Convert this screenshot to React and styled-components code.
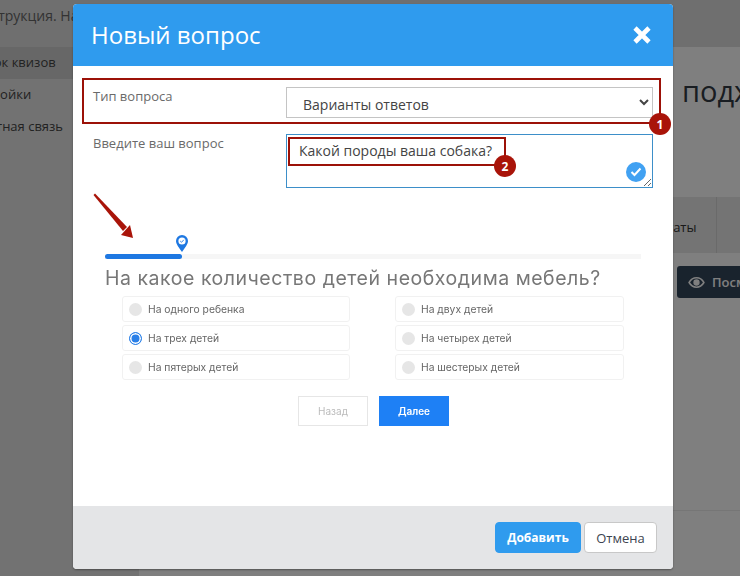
import React from "react";
import styled, { createGlobalStyle } from "styled-components";

const Global = createGlobalStyle`
  html, body { margin: 0; padding: 0; height: 100%; overflow: hidden; }
  body { font-family: "Open Sans", "Liberation Sans", sans-serif; background: #fff; }
`;

const Screen = styled.div`
  position: relative;
  width: 740px;
  height: 576px;
  overflow: hidden;
`;

const Page = styled.div`
  display: grid;
  grid-template-rows: 47px 1fr;
  height: 100%;
  margin-left: -37px;
`;

const TopBar = styled.div`
  background: #dfdfdf;
  color: #666;
  font-size: 14px;
  line-height: 31px;
  padding-left: 9px;
  white-space: nowrap;
`;

const PageBody = styled.div`
  display: grid;
  grid-template-columns: 176px 1fr;
  min-height: 0;
`;

const Sidebar = styled.nav`
  background: #e4e4e4;
`;

const SideItem = styled.div`
  height: 32px;
  line-height: 31px;
  font-size: 13px;
  color: #444;
  white-space: nowrap;
  background: ${p => (p.$active ? "#cfcfcf" : "transparent")};
`;

const Main = styled.main`
  min-width: 0;
  overflow: hidden;
  background: #fff;
`;

const PageTitle = styled.h1`
  margin: 24px 0 0;
  padding-left: 543px;
  height: 126px;
  font-size: 29px;
  line-height: 40px;
  font-weight: 400;
  color: #333b44;
  white-space: nowrap;
`;

const Tabs = styled.div`
  display: flex;
  height: 56px;
  background: #e8e8e8;
  padding-left: 485px;
  font-size: 13px;
  color: #333;
`;

const Tab = styled.div`
  width: 92px;
  line-height: 60px;
  border-right: 1px solid #d4d4d4;
  white-space: nowrap;
`;

const PreviewButton = styled.div`
  display: flex;
  align-items: center;
  gap: 7px;
  margin: 13px 0 0 538px;
  width: 200px;
  height: 32px;
  padding-left: 11px;
  background: #33465a;
  border-radius: 3px;
  color: #fff;
  font-size: 13px;
  font-weight: 600;
  white-space: nowrap;

  svg {
    flex: none;
  }
`;

const BottomRule = styled.div`
  margin-top: 212px;
  border-top: 1px solid #ececec;
`;

const Overlay = styled.div`
  position: absolute;
  inset: 0;
  background: rgba(0, 0, 0, 0.5);
`;

const Modal = styled.div`
  position: absolute;
  left: 73px;
  top: 4px;
  width: 600px;
  height: 565px;
  display: flex;
  flex-direction: column;
  background: #fff;
  border-radius: 4px;
  overflow: hidden;
  box-shadow: 0 1px 2px rgba(0, 0, 0, 0.35);
`;

const ModalHeader = styled.header`
  flex: none;
  height: 62px;
  display: flex;
  align-items: center;
  justify-content: space-between;
  padding: 0 21px 0 18px;
  background: #2f9bee;
  color: #fff;
`;

const ModalTitle = styled.h2`
  margin: 0;
  font-size: 24px;
  font-weight: 400;
  line-height: 62px;
`;

const ModalBody = styled.div`
  flex: 1;
  min-height: 0;
  padding: 21px 20px 0 20px;
`;

const FormRow = styled.div`
  display: grid;
  grid-template-columns: 193px 367px;
  margin-bottom: ${p => p.$gap || 0}px;
`;

const Label = styled.label`
  font-size: 13px;
  line-height: 20px;
  color: #6a6a6a;
  margin-top: -1px;
`;

const Select = styled.select`
  width: 367px;
  height: 31px;
  padding: 3px 0 0 12px;
  border: 1px solid #c4c4c4;
  background: #fff;
  font-family: inherit;
  font-size: 14px;
  color: #444;
  outline: none;
`;

const FieldWrap = styled.div`
  position: relative;
  height: 54px;
`;

const Textarea = styled.textarea`
  display: block;
  box-sizing: border-box;
  width: 367px;
  height: 54px;
  padding: 6px 12px;
  border: 1px solid #3d8fc9;
  font-family: inherit;
  font-size: 14px;
  line-height: 20px;
  color: #444;
  outline: none;
  resize: both;
`;

const ValidBadge = styled.span`
  position: absolute;
  right: 7px;
  bottom: 6px;
  width: 20px;
  height: 20px;
  display: flex;
  align-items: center;
  justify-content: center;
  border-radius: 50%;
  background: #41a1f2;
`;

const Mark = styled.div`
  position: absolute;
  left: ${p => p.$x}px;
  top: ${p => p.$y}px;
  width: ${p => p.$w}px;
  height: ${p => p.$h}px;
  box-sizing: border-box;
  border: 2px solid #9c1108;
  pointer-events: none;
`;

const Badge = styled.span`
  position: absolute;
  left: ${p => p.$x}px;
  top: ${p => p.$y}px;
  width: 22px;
  height: 22px;
  display: flex;
  align-items: center;
  justify-content: center;
  border-radius: 50%;
  background: #a91409;
  color: #fff;
  font-size: 12px;
  font-weight: 700;
`;

const Arrow = styled.svg`
  position: absolute;
  left: 90px;
  top: 190px;
`;

const Quiz = styled.section`
  width: 536px;
  margin: 66px 0 0 12px;
  color: #777;
  filter: blur(0.35px);
`;

const Track = styled.div`
  position: relative;
  height: 5px;
  background: #f6f6f6;
`;

const Progress = styled.div`
  height: 5px;
  background: #1e78e2;
  border-radius: 3px;
`;

const Pin = styled.svg`
  position: absolute;
  left: 71px;
  top: -19px;
`;

const QuizTitle = styled.h3`
  margin: 6px 0 0;
  font-family: Inter, "Open Sans", sans-serif;
  font-size: 19.5px;
  line-height: 26px;
  font-weight: 400;
  letter-spacing: 0.53px;
  white-space: nowrap;
`;

const Options = styled.div`
  display: grid;
  grid-template-columns: 228px 229px;
  column-gap: 45px;
  row-gap: 3px;
  margin: 5px 0 0 17px;
`;

const Option = styled.div`
  display: flex;
  align-items: center;
  gap: 6px;
  height: 24px;
  padding-left: 6px;
  border: 1px solid #f1f1f1;
  border-radius: 3px;
  font-family: Inter, "Open Sans", sans-serif;
  font-size: 10.3px;
  color: #666;
`;

const Radio = styled.span`
  box-sizing: border-box;
  width: 13px;
  height: 13px;
  border-radius: 50%;
  background: ${p => (p.$on ? "#2a80e8" : "#e6e6e6")};
  border: ${p => (p.$on ? "1.5px solid #2a80e8" : "none")};
  box-shadow: ${p => (p.$on ? "inset 0 0 0 1.5px #fff" : "none")};
`;

const QuizNav = styled.div`
  display: flex;
  gap: 11px;
  margin: 16px 0 0 193px;
`;

const QuizBtn = styled.div`
  box-sizing: border-box;
  width: 70px;
  height: 30px;
  display: flex;
  align-items: center;
  justify-content: center;
  font-family: Inter, "Open Sans", sans-serif;
  font-size: 10px;
  font-weight: ${p => (p.$primary ? 600 : 400)};
  color: ${p => (p.$primary ? "#fff" : "#bbb")};
  background: ${p => (p.$primary ? "#1e80f5" : "#fff")};
  border: 1px solid ${p => (p.$primary ? "#1e80f5" : "#e6e6e6")};
`;

const ModalFooter = styled.footer`
  flex: none;
  height: 63px;
  display: flex;
  justify-content: flex-end;
  align-items: flex-start;
  gap: 3px;
  padding: 16px 16px 0 0;
  box-sizing: border-box;
  background: #e4e5e7;
`;

const FooterBtn = styled.button`
  box-sizing: border-box;
  width: ${p => (p.$primary ? 86 : 73)}px;
  height: 31px;
  border-radius: 4px;
  border: 1px solid ${p => (p.$primary ? "#2f9bee" : "#c8c8c8")};
  background: ${p => (p.$primary ? "#2f9bee" : "#fff")};
  color: ${p => (p.$primary ? "#fff" : "#3d4450")};
  font-family: inherit;
  font-size: ${p => (p.$primary ? 12 : 13)}px;
  font-weight: ${p => (p.$primary ? 700 : 400)};
  padding: 0;
`;

const quizOptions = [
  ["На одного ребенка", false],
  ["На двух детей", false],
  ["На трех детей", true],
  ["На четырех детей", false],
  ["На пятерых детей", false],
  ["На шестерых детей", false],
];

export default function App() {
  return (
    <Screen>
      <Global />
      <Page>
        <TopBar>Инструкция. Настройка квиза</TopBar>
        <PageBody>
          <Sidebar>
            <SideItem $active>Список квизов</SideItem>
            <SideItem>Настройки</SideItem>
            <SideItem>Обратная связь</SideItem>
          </Sidebar>
          <Main>
            <PageTitle>подходит</PageTitle>
            <Tabs>
              <Tab>Результаты</Tab>
            </Tabs>
            <PreviewButton>
              <svg width="17" height="13" viewBox="0 0 18 14" fill="none" stroke="#fff" strokeWidth="1.6">
                <path d="M1 7c2-3.400 4.800-5 8-5s6 1.600 8 5c-2 3.400-4.800 5-8 5s-6-1.600-8-5z" />
                <circle cx="9" cy="7" r="2.600" fill="#fff" />
              </svg>
              Посмотреть
            </PreviewButton>
            <BottomRule />
          </Main>
        </PageBody>
      </Page>
      <Overlay />
      <Modal>
        <ModalHeader>
          <ModalTitle>Новый вопрос</ModalTitle>
          <svg width="20" height="20" viewBox="0 0 20 20">
            <path d="M3 3l14 14M17 3L3 17" stroke="#fff" strokeWidth="4.600" />
          </svg>
        </ModalHeader>
        <ModalBody>
          <FormRow $gap={16}>
            <Label>Тип вопроса</Label>
            <Select defaultValue="variants">
              <option value="variants">Варианты ответов</option>
            </Select>
          </FormRow>
          <FormRow>
            <Label>Введите ваш вопрос</Label>
            <FieldWrap>
              <Textarea defaultValue="Какой породы ваша собака?" />
              <ValidBadge>
                <svg width="12" height="10" viewBox="0 0 12 10">
                  <path d="M1.500 5l3 3 6-6.500" fill="none" stroke="#fff" strokeWidth="2" />
                </svg>
              </ValidBadge>
            </FieldWrap>
          </FormRow>
          <Quiz>
            <Track>
              <Progress style={{ width: `${(77 / 536) * 100}%` }} />
              <Pin width="12" height="17" viewBox="0 0 12 17">
                <path d="M6 0a6 6 0 0 1 6 6c0 3.500-3.200 6.500-6 11C3.200 12.500 0 9.500 0 6a6 6 0 0 1 6-6z" fill="#1e78e2" />
                <circle cx="6" cy="6" r="3.600" fill="#fff" />
                <path d="M4.200 6l1.300 1.300 2.300-2.500" fill="none" stroke="#1e78e2" strokeWidth="0.900" />
              </Pin>
            </Track>
            <QuizTitle>На какое количество детей необходима мебель?</QuizTitle>
            <Options>
              {quizOptions.map(([text, on]) => (
                <Option key={text}>
                  <Radio $on={on} />
                  {text}
                </Option>
              ))}
            </Options>
            <QuizNav>
              <QuizBtn>Назад</QuizBtn>
              <QuizBtn $primary>Далее</QuizBtn>
            </QuizNav>
          </Quiz>
        </ModalBody>
        <ModalFooter>
          <FooterBtn $primary>Добавить</FooterBtn>
          <FooterBtn>Отмена</FooterBtn>
        </ModalFooter>
      </Modal>
      <Mark $x={82} $y={78} $w={579} $h={46} />
      <Badge $x={649} $y={113}>1</Badge>
      <Mark $x={288} $y={137} $w={218} $h={29} />
      <Badge $x={494} $y={155}>2</Badge>
      <Arrow width="50" height="56" viewBox="0 0 50 56">
        <path d="M3.500 5L5 3.500 37 37 33 41z" fill="#a91409" />
        <path d="M43 48l-12-3 9-10z" fill="#a91409" />
      </Arrow>
    </Screen>
  );
}
